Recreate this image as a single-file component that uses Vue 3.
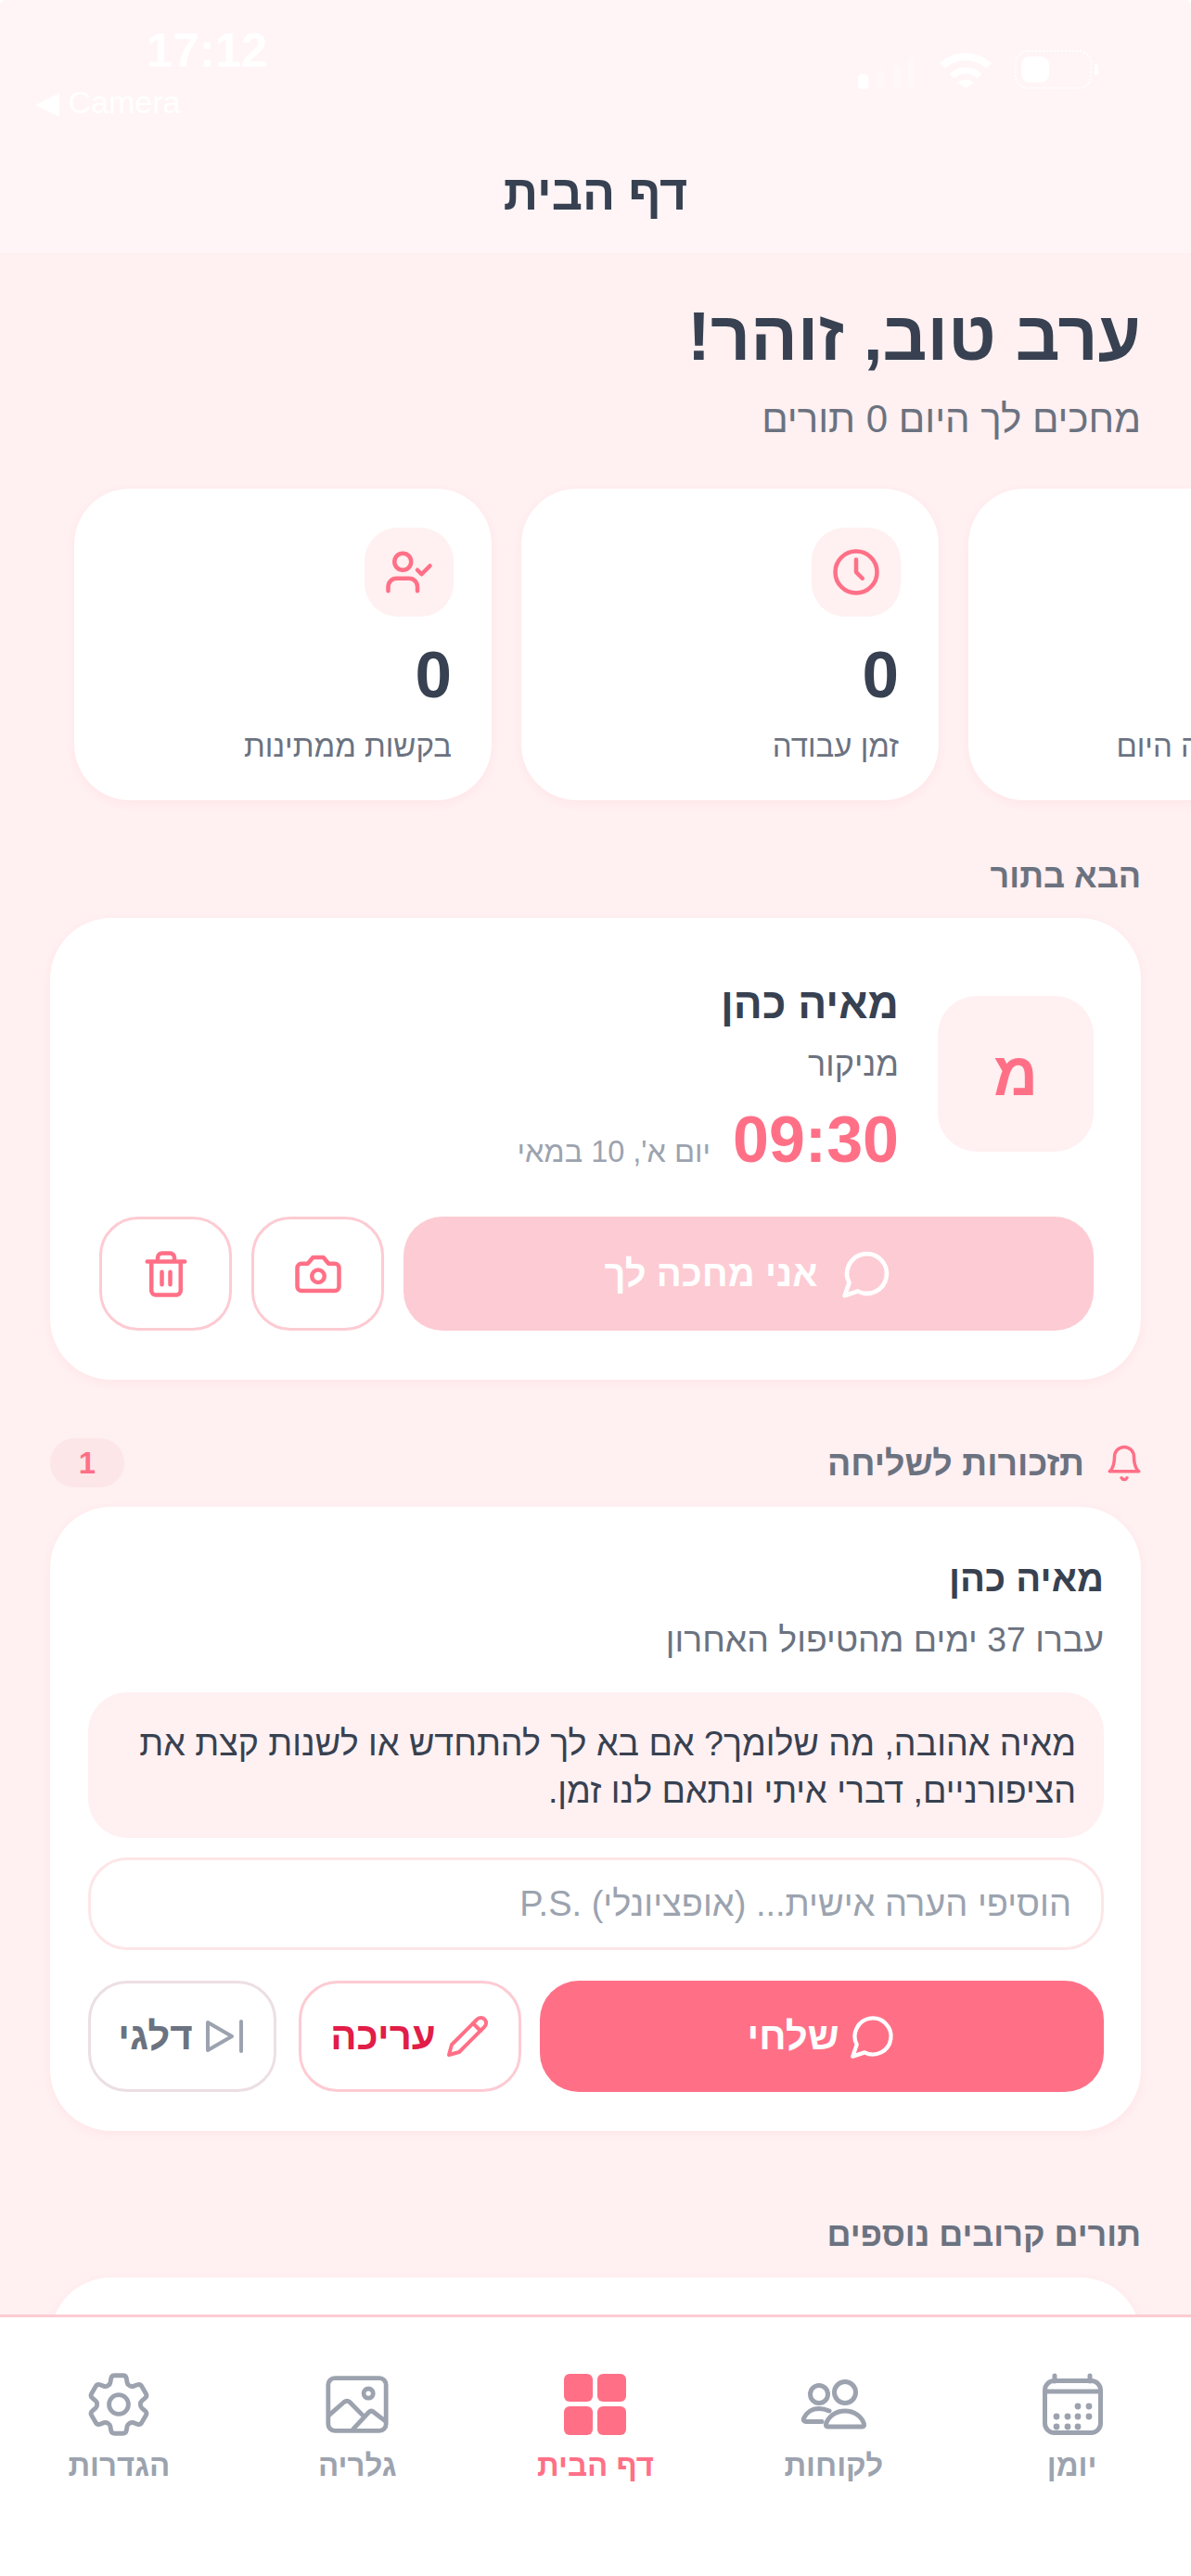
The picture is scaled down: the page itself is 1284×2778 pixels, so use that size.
<template>
  <div class="app" dir="rtl">
    <header class="top">
      <div class="status" dir="ltr">
        <div class="status-left">
          <div class="clock">17:12</div>
          <div class="back">◀ Camera</div>
        </div>
        <div class="status-right">
          <svg class="signal" viewBox="0 0 60 20" width="60" height="20" fill="#fff">
            <rect x="0" y="2" width="11" height="16" rx="4" />
            <rect x="20" y="-2" width="8" height="20" rx="3" opacity=".3" />
            <rect x="38" y="-8" width="8" height="26" rx="3" opacity=".3" />
            <rect x="54" y="-16" width="6" height="34" rx="3" opacity=".3" />
          </svg>
          <svg class="wifi" viewBox="0 0 58 40" width="58" height="40" fill="none" stroke="#fff">
            <path d="M4 16C17 3 41 3 54 16" stroke-width="8" />
            <path d="M14 27c9-8 21-8 30 0" stroke-width="7" />
            <path d="M20 34c5-4 13-4 18 0l-9 6z" fill="#fff" stroke="none" />
          </svg>
          <div class="battery"><span class="battery-fill"></span></div>
        </div>
      </div>
      <h1 class="page-title">דף הבית</h1>
    </header>

    <main class="content">
      <h2 class="greeting">ערב טוב, זוהר!</h2>
      <p class="greeting-sub">מחכים לך היום 0 תורים</p>

      <div class="stats">
        <div class="stat-card">
          <div class="stat-icon">
            <svg viewBox="0 0 24 24" width="54" height="54" class="ico"><rect x="3" y="4" width="18" height="18" rx="2" /><path d="M16 2v4M8 2v4M3 10h18" /></svg>
          </div>
          <div class="stat-num">0</div>
          <div class="stat-label">הכנסה צפויה היום</div>
        </div>
        <div class="stat-card">
          <div class="stat-icon">
            <svg viewBox="0 0 24 24" width="54" height="54" class="ico"><circle cx="12" cy="12" r="10" /><path d="M12 6v6l3 3" /></svg>
          </div>
          <div class="stat-num">0</div>
          <div class="stat-label">זמן עבודה</div>
        </div>
        <div class="stat-card">
          <div class="stat-icon">
            <svg viewBox="0 0 24 24" width="54" height="54" class="ico"><path d="M16 21v-2a4 4 0 0 0-4-4H6a4 4 0 0 0-4 4v2" /><circle cx="9" cy="7" r="4" /><path d="m16 11 2 2 4-4" /></svg>
          </div>
          <div class="stat-num">0</div>
          <div class="stat-label">בקשות ממתינות</div>
        </div>
      </div>

      <div class="section-title next-title">הבא בתור</div>

      <section class="card next-card">
        <div class="next-row">
          <div class="avatar">מ</div>
          <div class="next-info">
            <div class="next-name">מאיה כהן</div>
            <div class="next-service">מניקור</div>
            <div class="next-when">
              <span class="next-time">09:30</span>
              <span class="next-date">יום א', 10 במאי</span>
            </div>
          </div>
        </div>
        <div class="next-actions">
          <button class="btn-wait">
            <svg viewBox="0 0 24 24" width="57" height="57" class="ico ico-white"><path d="M7.900 20A9 9 0 1 0 4 16.100L2 22Z" /></svg>
            <span>אני מחכה לך</span>
          </button>
          <button class="btn-square">
            <svg viewBox="0 0 24 24" width="54" height="54" class="ico"><path d="M14.500 4h-5L7 7H4a2 2 0 0 0-2 2v9a2 2 0 0 0 2 2h16a2 2 0 0 0 2-2V9a2 2 0 0 0-2-2h-3l-2.500-3z" /><circle cx="12" cy="13" r="3" /></svg>
          </button>
          <button class="btn-square">
            <svg viewBox="0 0 24 24" width="54" height="54" class="ico"><path d="M3 6h18M19 6v14c0 1-1 2-2 2H7c-1 0-2-1-2-2V6M8 6V4c0-1 1-2 2-2h4c1 0 2 1 2 2v2M10 11v6M14 11v6" /></svg>
          </button>
        </div>
      </section>

      <div class="reminders-head">
        <div class="reminders-title">
          <svg viewBox="0 0 24 24" width="42" height="42" class="ico bell"><path d="M6 8a6 6 0 0 1 12 0c0 7 3 9 3 9H3s3-2 3-9" /><path d="M10.300 21a1.940 1.940 0 0 0 3.400 0" /></svg>
          <span class="section-title">תזכורות לשליחה</span>
        </div>
        <span class="count">1</span>
      </div>

      <section class="card reminder-card">
        <div class="rem-name">מאיה כהן</div>
        <div class="rem-sub">עברו 37 ימים מהטיפול האחרון</div>
        <div class="rem-msg">מאיה אהובה, מה שלומך? אם בא לך להתחדש או לשנות קצת את הציפורניים, דברי איתי ונתאם לנו זמן.</div>
        <input class="rem-input" type="text" :placeholder="notePlaceholder" />
        <div class="rem-actions">
          <button class="btn-send">
            <svg viewBox="0 0 24 24" width="52" height="52" class="ico ico-white"><path d="M7.900 20A9 9 0 1 0 4 16.100L2 22Z" /></svg>
            <span>שלחי</span>
          </button>
          <button class="btn-edit">
            <svg viewBox="0 0 24 24" width="48" height="48" class="ico"><path d="M17 3a2.850 2.830 0 1 1 4 4L7.500 20.500 2 22l1.500-5.500Z" /><path d="m15 5 4 4" /></svg>
            <span>עריכה</span>
          </button>
          <button class="btn-skip">
            <svg viewBox="0 0 24 24" width="48" height="48" class="ico ico-grey"><path d="M3 4.500l13 7.500-13 7.500z" /><path d="M21 4v16" /></svg>
            <span>דלגי</span>
          </button>
        </div>
      </section>

      <div class="section-title more-title">תורים קרובים נוספים</div>
      <section class="card more-card"></section>
    </main>

    <nav class="tabs">
      <div class="tab">
        <svg viewBox="0 0 68 68" width="68" height="68" class="tab-ico">
          <rect x="4.500" y="8.500" width="60" height="56" rx="10" />
          <path d="M4.500 20h60M15 3v6M53 3v6" />
          <g class="dots">
            <circle v-for="d in calendarDots" :key="d[0] + '-' + d[1]" :cx="d[0]" :cy="d[1]" r="3.400" />
          </g>
        </svg>
        <span>יומן</span>
      </div>
      <div class="tab">
        <svg viewBox="0 0 72 68" width="72" height="68" class="tab-ico">
          <circle cx="48" cy="21" r="11.500" />
          <circle cx="20" cy="23" r="9.500" />
          <path d="M30 58h36c2 0 3-1 2.500-3C66 47 58 41 48 41s-18 6-20.500 14c-.5 2 .5 3 2.500 3z" />
          <path d="M31 41c-3.500-1.500-7.500-2.500-11-2.500C12 38.500 6 43 3.500 49c-.8 2 .5 3.500 2.500 3.500h17" />
        </svg>
        <span>לקוחות</span>
      </div>
      <div class="tab tab-active">
        <svg viewBox="0 0 68 68" width="68" height="68" fill="#ff7087">
          <rect x="0" y="1" width="31" height="30" rx="6" />
          <rect x="36" y="1" width="31" height="30" rx="6" />
          <rect x="0" y="36" width="31" height="31" rx="6" />
          <rect x="36" y="36" width="31" height="31" rx="6" />
        </svg>
        <span>דף הבית</span>
      </div>
      <div class="tab">
        <svg viewBox="0 0 24 24" width="68" height="68" class="tab-ico tab-ico-thin">
          <rect x="1" y="2" width="22" height="20" rx="2.500" />
          <circle cx="16.300" cy="7.800" r="1.800" />
          <path d="M1.200 16.200l5.800-5.100c.8-.6 1.500-.6 2.200 0l5 5.100M10.400 21.500l6-6.500c.7-.7 1.300-.7 2 0l4.300 3.300" />
        </svg>
        <span>גלריה</span>
      </div>
      <div class="tab">
        <svg viewBox="2.200 2.200 19.600 19.600" width="68" height="68" class="tab-ico tab-ico-gear">
          <path d="M9.594 3.940c.09-.542.56-.94 1.110-.94h2.593c.55 0 1.020.398 1.110.94l.213 1.281c.063.374.313.686.645.870.074.040.147.083.22.127.324.196.72.257 1.075.124l1.217-.456a1.125 1.125 0 011.370.49l1.296 2.247a1.125 1.125 0 01-.26 1.431l-1.003.827c-.293.24-.438.613-.431.992a6.759 6.759 0 010 .255c-.007.378.138.75.43.99l1.005.828c.424.35.534.954.26 1.430l-1.298 2.247a1.125 1.125 0 01-1.369.491l-1.217-.456c-.355-.133-.75-.072-1.076.124a6.570 6.570 0 01-.22.128c-.331.183-.581.495-.644.869l-.213 1.280c-.09.543-.56.941-1.110.941h-2.594c-.55 0-1.020-.398-1.110-.94l-.213-1.281c-.062-.374-.312-.686-.644-.87a6.520 6.520 0 01-.22-.127c-.325-.196-.72-.257-1.076-.124l-1.217.456a1.125 1.125 0 01-1.369-.49l-1.297-2.247a1.125 1.125 0 01.26-1.431l1.004-.827c.292-.24.437-.613.43-.992a6.932 6.932 0 010-.255c.007-.378-.138-.75-.43-.99l-1.004-.828a1.125 1.125 0 01-.26-1.430l1.297-2.247a1.125 1.125 0 011.370-.491l1.216.456c.356.133.751.072 1.076-.124.072-.044.146-.087.22-.128.332-.183.582-.495.644-.869l.214-1.281z" />
          <path d="M15 12a3 3 0 11-6 0 3 3 0 016 0z" />
        </svg>
        <span>הגדרות</span>
      </div>
    </nav>
  </div>
</template>

<script setup>
const calendarDots = [
  [40, 36], [52, 36],
  [17, 47], [29, 47], [40, 47], [52, 47],
  [17, 58], [29, 58], [40, 58],
]
// LRM keeps the dot of P.S. on the Latin side
const notePlaceholder = 'הוסיפי הערה אישית... (אופציונלי) P.S.\u200E'
</script>

<style scoped>
.app {
  width: 1284px; height: 2778px; display: flex; flex-direction: column;
  overflow: hidden; background: #fff0f1; color: #374151; border-radius: 6px;
  font-family: "Liberation Sans", Arial, sans-serif;
}
.top { height: 273px; flex-shrink: 0; background: #fff5f6; }
.status { height: 150px; display: flex; justify-content: space-between; }
.status-left { padding: 30px 0 0 38px; color: #fff; }
.clock { font-size: 51px; font-weight: 700; line-height: 50px; margin-left: 120px; }
.back { font-size: 34px; line-height: 40px; margin-top: 10px; }
.status-right { display: flex; align-items: flex-start; padding: 54px 107px 0 0; }
.signal { margin-top: 24px; margin-right: 27px; overflow: visible; }
.wifi { margin-top: 1px; margin-right: 24px; }
.battery {
  position: relative; width: 83px; height: 42px; border: 2px dotted #fff; border-radius: 14px;
  padding: 5px; box-sizing: border-box;
}
.battery::after {
  content: ""; position: absolute; top: 13px; right: -9px; width: 4px; height: 12px;
  background: #fff; border-radius: 0 3px 3px 0;
}
.battery-fill { display: block; width: 30px; height: 100%; background: #fff; border-radius: 9px; }
.page-title { margin: 0; text-align: center; font-size: 52px; font-weight: 700; line-height: 116px; }

.content { flex: 1; min-height: 0; overflow: hidden; padding: 0 54px; }
.greeting { margin: 44px 0 0; font-size: 75px; font-weight: 700; line-height: 90px; }
.greeting-sub { margin: 17px 0 0; font-size: 42px; line-height: 56px; color: #6b7280; }

.stats { display: flex; gap: 32px; margin: 47px -264px 0 0; }
.stat-card {
  width: 450px; height: 336px; flex-shrink: 0; box-sizing: border-box; padding: 42px 41px 0;
  background: #fff; border-radius: 60px; box-shadow: 0 3px 10px rgba(255, 112, 135, .08);
}
.stat-icon {
  width: 96px; height: 96px; border-radius: 36px; background: #fff0f1;
  display: flex; align-items: center; justify-content: center;
}
.stat-num { font-size: 71px; font-weight: 700; line-height: 70px; margin: 28px 2px 0 0; }
.stat-label { font-size: 33px; line-height: 40px; color: #6b7280; margin: 22px 2px 0 0; white-space: nowrap; }

.ico { fill: none; stroke: #ff7087; stroke-width: 2; stroke-linecap: round; stroke-linejoin: round; flex-shrink: 0; }
.ico-white { stroke: #fff; }
.ico-grey { stroke: #9ca3af; }

.section-title { font-size: 36px; font-weight: 700; line-height: 44px; color: #6b7280; }
.next-title { margin-top: 60px; }

.card {
  background: #fff; border-radius: 66px; box-sizing: border-box;
  box-shadow: 0 3px 10px rgba(255, 112, 135, .08);
}
.next-card { margin-top: 23px; height: 498px; padding: 62px 51px 0 53px; }
.next-row { display: flex; align-items: center; gap: 42px; }
.avatar {
  width: 168px; height: 168px; flex-shrink: 0; border-radius: 42px; background: #fff0f1;
  display: flex; align-items: center; justify-content: center;
  color: #ff7087; font-size: 66px; font-weight: 700;
}
.next-name { font-size: 46px; font-weight: 700; line-height: 60px; }
.next-service { font-size: 36px; line-height: 46px; color: #6b7280; margin-top: 13px; }
.next-when { display: flex; align-items: baseline; gap: 24px; margin-top: 23px; }
.next-time { font-size: 70px; font-weight: 700; line-height: 70px; color: #ff7087; direction: ltr; }
.next-date { font-size: 32.500px; color: #9ca3af; }
.next-actions { display: flex; gap: 21px; margin-top: 48px; }
button {
  font-family: inherit; display: flex; align-items: center; justify-content: center;
  box-sizing: border-box; cursor: pointer;
}
.btn-wait {
  flex: 1; height: 123px; border: none; border-radius: 42px; background: #fdcbd3;
  color: #fff; font-size: 40px; font-weight: 700; gap: 24px;
}
.btn-square {
  width: 143px; height: 123px; border: 3px solid #fdcbd3; border-radius: 42px; background: #fff;
}

.reminders-head { display: flex; align-items: center; justify-content: space-between; margin-top: 63px; }
.reminders-title { display: flex; align-items: center; gap: 22px; }
.reminders-title .section-title { font-size: 37.500px; }
.bell { margin-right: -3px; }
.count {
  width: 80px; height: 53px; border-radius: 27px; background: #fde6e8; color: #ff7087;
  display: flex; align-items: center; justify-content: center; font-size: 33px; font-weight: 700;
}
.reminder-card { margin-top: 21px; height: 673px; padding: 50px 40px 0 41px; }
.rem-name { font-size: 40px; font-weight: 700; line-height: 54px; }
.rem-sub { font-size: 37.400px; line-height: 46px; color: #6b7280; margin-top: 16px; }
.rem-msg {
  margin-top: 34px; height: 157px; box-sizing: border-box; padding: 30px 30px 0; border-radius: 42px;
  background: #fff0f1; font-size: 37.600px; line-height: 51px;
}
.rem-input {
  display: block; width: 100%; height: 100px; margin-top: 21px; box-sizing: border-box; padding: 0 32px;
  border: 3px solid #fde6e8; border-radius: 42px; background: #fff; outline: none;
  font-family: inherit; font-size: 38px; color: #374151;
}
.rem-input::placeholder { color: #9ca3af; opacity: 1; }
.rem-actions { display: flex; gap: 22px; margin-top: 33px; }
.rem-actions button { height: 120px; border-radius: 42px; font-size: 42px; font-weight: 700; gap: 10px; }
.btn-send { flex: 1; border: none; background: #ff7087; color: #fff; }
.btn-edit { width: 240px; margin: 0 -2px 0 2px; border: 3px solid #fdcbd3; background: #fff; color: #e11d48; }
.btn-skip { width: 203px; border: 3px solid #ecdfe3; background: #fff; color: #6b7280; }

.more-title { margin-top: 90px; }
.more-card { margin-top: 24px; height: 300px; }

.tabs {
  height: 282px; flex-shrink: 0; box-sizing: border-box; padding-top: 60px;
  display: grid; grid-template-columns: repeat(5, 1fr); align-items: start;
  background: #fff; border-top: 3px solid #fdcbd3;
}
.tab {
  display: flex; flex-direction: column; align-items: center; gap: 12px;
  font-size: 33px; font-weight: 700; line-height: 40px; color: #9ca3af;
}
.tab-active { color: #ff7087; }
.tab-ico { fill: none; stroke: #9ca3af; stroke-width: 5; stroke-linecap: round; stroke-linejoin: round; }
.tab-ico-thin { stroke-width: 1.700; }
.tab-ico-gear { stroke-width: 1.400; }
.dots circle { fill: #9ca3af; stroke: none; }
</style>

<style>
body { margin: 0; background: #fff; }
</style>
